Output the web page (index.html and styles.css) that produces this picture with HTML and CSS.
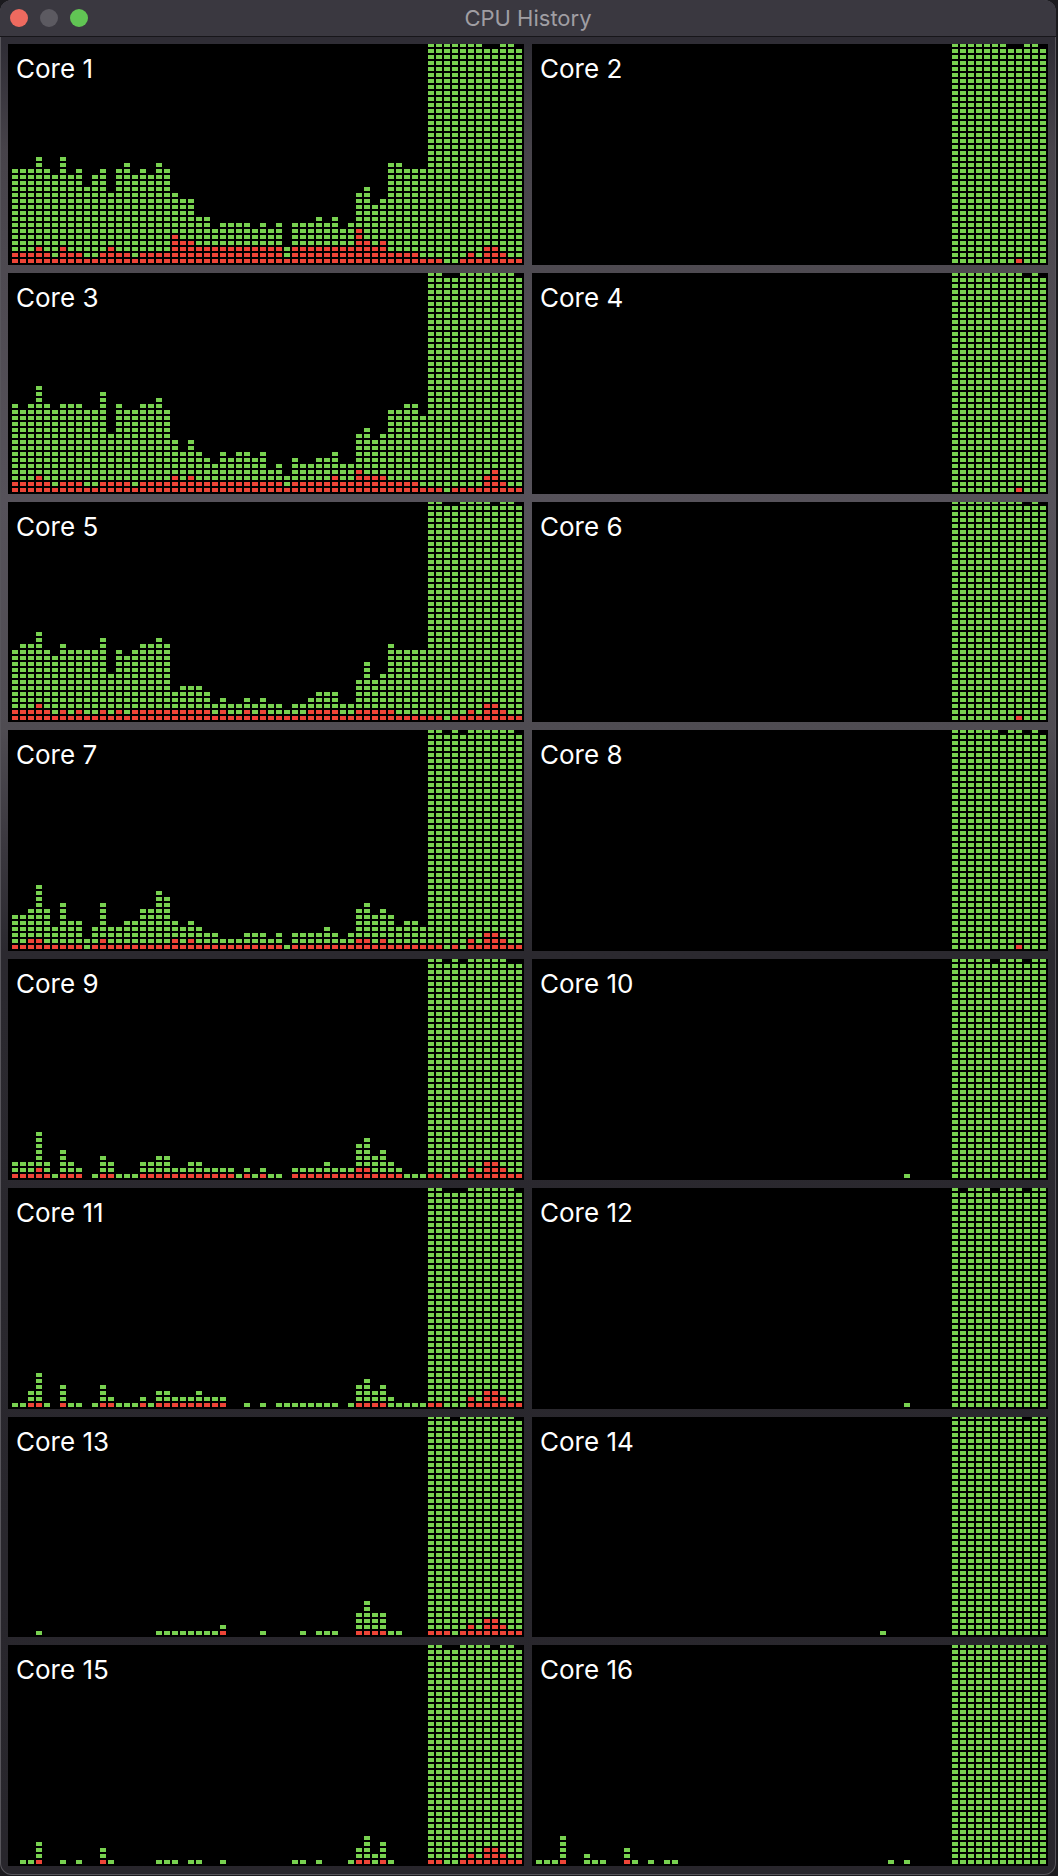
FILE: index.html

```html
<!DOCTYPE html>
<html lang="en">
<head>
  <meta charset="UTF-8">
  <meta name="viewport" content="width=device-width, initial-scale=1.0">
  <title>CPU History</title>
  <link rel="stylesheet" href="styles.css">
</head>
<body>
  <div class="window">
    <div class="titlebar">
      <div class="lights">
        <span class="light close"></span>
        <span class="light min"></span>
        <span class="light zoom"></span>
      </div>
      <div class="title">CPU History</div>
    </div>
    <div class="cores" id="cores"></div>
  </div>
  <script src="script.js"></script>
</body>
</html>
```

FILE: styles.css

```css
html, body {
  margin: 0;
  background: #1b1a1e;
}

body {
  width: 1058px;
  height: 1876px;
  overflow: hidden;
  font-family: Inter, "Liberation Sans", sans-serif;
}

.window {
  width: 1056px;
  height: 1875px;
  display: flex;
  flex-direction: column;
  border-radius: 12px;
  overflow: hidden;
  box-shadow: inset 0 0 0 1px #57555b;
  background: linear-gradient(to bottom, #2f2d35 44px, #47434a 150px, #4e4a51 270px, #56525a 500px, #4f4c52 730px, #3a373e 850px, #2b292f 952px, #28262c 1876px);
}

.titlebar {
  height: 36px;
  flex: none;
  display: flex;
  align-items: center;
  position: relative;
  background: #3a3840;
  border-bottom: 1px solid #17161a;
}

.lights {
  display: flex;
  gap: 12px;
  padding-left: 10px;
}

.light {
  width: 18px;
  height: 18px;
  border-radius: 50%;
}

.close { background: #ee6a5f; }
.min { background: #5c5a61; }
.zoom { background: #61c554; }

.title {
  position: absolute;
  left: 0;
  right: 0;
  text-align: center;
  font-size: 22px;
  color: #a09ea3;
}

.cores {
  height: 1822px;
  margin-top: 7px;
  padding: 0 8px;
  display: grid;
  grid-template-columns: 516px 516px;
  grid-template-rows: repeat(8, 1fr);
  gap: 8px;
}

.core {
  position: relative;
  overflow: hidden;
  min-height: 0;
  background: #000;
}

.label {
  position: absolute;
  top: 10px;
  left: 8px;
  font-size: 26px;
  line-height: 30px;
  color: #fff;
}

.bars {
  height: 100%;
  box-sizing: border-box;
  padding: 0 0 2px 4px;
  display: flex;
  align-items: flex-end;
  gap: 2px;
}

.col {
  width: 6px;
  flex: none;
  display: flex;
  flex-direction: column-reverse;
  gap: 2px;
}

.cell {
  height: 4px;
  flex: none;
  background: #78d150;
}

.cell.sys {
  background: #ee4537;
}
```

FILE: script.js

```js
// bars = column height for the first 52 columns, sys = red cells per column
const cores = [
  {
    bars: [16,16,16,18,16,15,18,15,16,13,15,16,12,16,17,15,16,15,17,16,12,11,11,8,8,6,7,7,7,7,6,7,6,7,3,7,7,7,8,7,8,6,7,12,13,10,11,17,17,16,16,16],
    sys: [2,2,2,3,2,1,3,2,2,1,1,2,3,2,2,1,2,2,2,2,5,4,4,3,3,3,3,3,3,3,3,3,3,3,1,3,3,3,3,3,3,3,3,6,4,3,4,2,2,2,2,1,1,1,0,0,1,2,1,3,3,2,1,1],
    top: [52,53,54,55,56,57,58,61,62]
  },
  {
    bars: [15,14,15,18,15,14,15,15,15,14,14,17,10,15,14,14,15,15,16,14,9,7,9,7,6,5,7,6,7,7,6,7,4,5,3,6,5,5,6,6,7,5,5,10,11,9,10,14,14,15,15,13],
    sys: [2,2,2,3,2,1,2,2,2,1,1,2,2,2,2,1,2,2,2,2,3,2,3,2,2,2,2,2,2,2,2,2,2,2,1,2,2,2,2,2,3,2,2,4,3,3,3,2,2,2,2,1,1,1,0,1,1,1,1,3,4,2,1,1],
    top: [52,53,56,57,58,59,60,61,62]
  },
  {
    bars: [12,13,13,15,12,11,13,12,12,12,12,14,8,12,11,12,13,13,14,13,5,6,6,6,5,3,4,3,3,4,3,4,3,3,2,3,3,4,5,5,5,3,3,7,10,7,8,13,12,12,12,12],
    sys: [2,2,2,3,2,1,2,1,2,1,1,2,1,2,1,2,2,2,2,2,2,2,2,2,2,1,2,1,1,2,1,2,1,1,1,1,1,2,2,2,2,1,1,2,2,2,2,2,1,1,1,1,1,1,0,1,1,2,1,3,3,2,1,1],
    top: [52,53,56,57,58,59,61,62]
  },
  {
    bars: [6,6,7,11,7,4,8,5,5,2,4,8,4,4,5,5,7,7,10,9,5,4,5,4,3,3,2,2,2,3,3,3,2,3,1,3,3,3,3,4,3,2,3,7,8,6,7,6,4,5,5,4],
    sys: [1,1,2,2,1,1,1,1,1,0,1,2,1,1,1,1,1,1,1,1,2,1,2,1,1,1,1,1,1,1,1,1,1,1,0,1,1,1,1,1,1,1,1,2,2,1,2,1,1,1,1,1,1,1,0,1,0,2,1,3,3,2,1,1],
    top: [52,53,55,57,58,59,60,61,62]
  },
  {
    bars: [3,3,3,8,3,1,5,3,2,0,1,4,3,1,1,1,3,3,4,4,2,2,3,3,2,2,2,2,1,2,1,2,1,1,0,2,2,2,2,3,2,2,2,6,7,4,5,3,2,1,1,1],
    sys: [1,1,1,2,1,0,1,1,1,0,0,1,1,0,0,0,1,1,1,1,1,1,1,1,1,1,1,1,0,1,0,1,0,0,0,1,1,1,1,1,1,1,1,2,2,1,1,1,1,0,0,0,1,1,0,1,0,2,1,3,3,2,1,1],
    top: [52,53,55,57,58,59,60,61]
  },
  {
    bars: [1,1,3,6,1,0,4,1,1,0,1,4,2,1,1,1,2,1,3,3,2,2,2,3,2,2,2,0,0,1,0,1,0,1,1,1,1,1,1,1,1,0,1,4,5,3,4,2,1,1,1,1],
    sys: [0,0,1,1,0,0,1,0,0,0,0,1,1,0,0,0,1,0,1,1,1,1,1,1,1,1,1,0,0,0,0,0,0,0,0,0,0,0,0,0,0,0,0,1,1,1,1,0,0,0,0,0,1,1,0,0,0,2,1,3,3,2,1,1],
    top: [52,53,57,58,59,60,61,62]
  },
  {
    bars: [0,0,0,1,0,0,0,0,0,0,0,0,0,0,0,0,0,0,1,1,1,1,1,1,1,1,2,0,0,0,0,1,0,0,0,0,1,0,1,1,1,0,0,4,6,4,4,1,1,0,0,0],
    sys: [0,0,0,0,0,0,0,0,0,0,0,0,0,0,0,0,0,0,0,0,0,0,0,0,0,0,1,0,0,0,0,0,0,0,0,0,0,0,0,0,0,0,0,1,1,1,1,0,0,0,0,0,1,1,1,0,1,2,1,3,3,2,1,1],
    top: [52,53,54,56,57,58,59,60,61,62]
  },
  {
    bars: [0,1,1,4,0,0,1,0,1,0,0,3,1,0,0,0,0,0,1,1,1,0,1,1,0,0,1,0,0,0,0,0,0,0,0,1,1,0,1,0,0,0,1,3,5,2,4,1,0,0,0,0],
    sys: [0,0,0,1,0,0,0,0,0,0,0,1,0,0,0,0,0,0,0,0,0,0,0,0,0,0,0,0,0,0,0,0,0,0,0,0,0,0,0,0,0,0,0,1,1,0,1,0,0,0,0,0,1,1,0,0,1,2,1,3,3,2,1,1],
    top: [52,53,56,57,58,59,61,62]
  }
];

// even numbered cores are nearly idle, only a few stray cells
const idle = [
  { stray: {}, red: [60], top: [52,53,54,55,56,57,58,61,62] },
  { stray: {}, red: [60], top: [52,53,54,55,56,57,58,59,60,62] },
  { stray: {}, red: [60], top: [52,53,54,55,56,57,58,59,60,62] },
  { stray: {}, red: [60], top: [52,53,54,55,56,57,59,60,62] },
  { stray: { 46: 1 }, red: [], top: [52,53,54,55,56,58,59,60,62,63] },
  { stray: { 46: 1 }, red: [], top: [52,54,55,56,58,59,60,62,63] },
  { stray: { 43: 1 }, red: [], top: [52,53,54,55,56,57,58,59,60,62,63] },
  { stray: { 0: 1, 1: 1, 2: 1, 3: 5, 6: 2, 7: 1, 8: 1, 11: 3, 12: 1, 14: 1, 16: 1, 17: 1, 44: 1, 46: 1 }, red: [3, 11], top: [52,53,54,55,56,57,58,59,60,61,62,63] }
];

function makeColumn(height, sys) {
  const col = document.createElement('div');
  col.className = 'col';
  for (let i = 0; i < height; i++) {
    const cell = document.createElement('div');
    cell.className = i < sys ? 'cell sys' : 'cell';
    col.appendChild(cell);
  }
  return col;
}

function makeCore(number, heightAt, sysAt) {
  const core = document.createElement('div');
  core.className = 'core';
  const bars = document.createElement('div');
  bars.className = 'bars';
  for (let i = 0; i < 64; i++) {
    bars.appendChild(makeColumn(heightAt(i), sysAt(i)));
  }
  const label = document.createElement('div');
  label.className = 'label';
  label.textContent = 'Core ' + number;
  core.appendChild(bars);
  core.appendChild(label);
  return core;
}

const grid = document.getElementById('cores');
cores.forEach((busy, row) => {
  const rest = idle[row];
  grid.appendChild(makeCore(row * 2 + 1,
    i => i < 52 ? busy.bars[i] : (busy.top.includes(i) ? 37 : 36),
    i => busy.sys[i]));
  grid.appendChild(makeCore(row * 2 + 2,
    i => i < 52 ? (rest.stray[i] || 0) : (rest.top.includes(i) ? 37 : 36),
    i => rest.red.includes(i) ? 1 : 0));
});
```
